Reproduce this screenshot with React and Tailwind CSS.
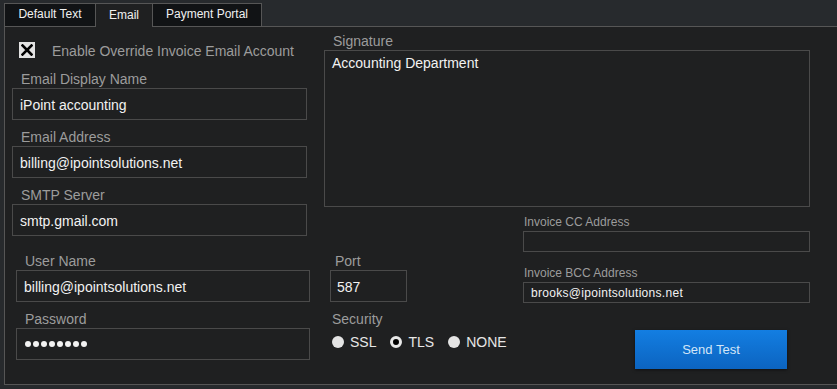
import React from "react";

function Field({ label, value, className = "", password = false }) {
  return (
    <div className={"flex flex-col " + className}>
      <div className="h-[16px] pl-[9px] text-[14px] leading-[16px] text-[#9c9c9c]">{label}</div>
      {password ? (
        <div className="mt-[1px] flex h-[32px] w-full items-center gap-[2px] border border-[#4a4a4a] px-[8px]">
          {Array.from({ length: 8 }).map((_, i) => (
            <span key={i} className="h-[6px] w-[6px] rounded-full bg-[#f2f2f2]" />
          ))}
        </div>
      ) : (
        <input
          readOnly
          defaultValue={value}
          className="mt-[1px] h-[32px] w-full border border-[#4a4a4a] bg-transparent px-[7px] pt-[1px] text-[14px] text-[#f2f2f2] outline-none"
        />
      )}
    </div>
  );
}

function Radio({ label, checked }) {
  return (
    <div className="flex items-center">
      {checked ? (
        <span className="h-[12px] w-[12px] rounded-full border-[3px] border-[#e8e8e8] bg-black" />
      ) : (
        <span className="h-[12px] w-[12px] rounded-full bg-[#e4e4e4]" />
      )}
      <span className="ml-[6px] text-[14px] leading-[16px] text-[#e6e6e6]">{label}</span>
    </div>
  );
}

export default function App() {
  return (
    <div className="h-[389px] w-[837px] overflow-hidden bg-[#272a2d] font-['Liberation_Sans',Arial,sans-serif]">
      {/* Tabs */}
      <div className="relative z-10 -mb-px flex pl-[4px] pt-[3px]">
        <div className="flex h-[24px] w-[92px] items-center justify-center border border-[#565656] bg-[#111315] pb-[2px] text-[12px] text-[#f0f0f0]">
          Default Text
        </div>
        <div className="-ml-px flex h-[24px] w-[58px] items-center justify-center border border-b-0 border-[#565656] bg-[#1f2021] pb-[2px] text-[12px] text-[#f0f0f0]">
          Email
        </div>
        <div className="-ml-px flex h-[24px] w-[110px] items-center justify-center border border-[#565656] bg-[#111315] pb-[2px] text-[12px] text-[#f0f0f0]">
          Payment Portal
        </div>
      </div>

      {/* Panel */}
      <div className="ml-[4px] flex h-[359px] w-[840px] items-start border border-[#565656] bg-[#1f2021] pl-[7px]">
        {/* Left column */}
        <div className="flex w-[298px] flex-col pt-[15px]">
          <div className="flex h-[16px] items-center">
            <span className="ml-[7px] flex h-[16px] w-[16px] items-center justify-center bg-[#e2e2e2]">
              <svg width="12" height="12" viewBox="0 0 12 12">
                <path d="M1.5 1.5 L10.5 10.5 M10.5 1.5 L1.5 10.5" stroke="#000" strokeWidth="2.6" strokeLinecap="square" />
              </svg>
            </span>
            <span className="ml-[17px] pt-[2px] text-[14px] leading-[16px] text-[#9c9c9c]">Enable Override Invoice Email Account</span>
          </div>
          <Field label="Email Display Name" value="iPoint accounting" className="mt-[13px] w-[295px]" />
          <Field label="Email Address" value="billing@ipointsolutions.net" className="mt-[9px] w-[295px]" />
          <Field label="SMTP Server" value="smtp.gmail.com" className="mt-[9px] w-[295px]" />
          <Field label="User Name" value="billing@ipointsolutions.net" className="ml-[4px] mt-[17px] w-[294px]" />
          <Field label="Password" password className="ml-[4px] mt-[9px] w-[294px]" />
        </div>

        {/* Right area */}
        <div className="ml-[14px] flex w-[486px] flex-col pt-[6px]">
          <div className="h-[16px] pl-[9px] text-[14px] leading-[16px] text-[#9c9c9c]">Signature</div>
          <textarea
            readOnly
            defaultValue="Accounting Department"
            className="mt-[1px] h-[157px] w-full resize-none border border-[#4a4a4a] bg-transparent px-[7px] pt-[4px] text-[14px] leading-[16px] text-[#f2f2f2] outline-none"
          />
          <div className="flex items-start">
            {/* Port / Security */}
            <div className="ml-[6px] flex w-[193px] flex-col pt-[46px]">
              <div className="h-[16px] pl-[5px] text-[14px] leading-[16px] text-[#9c9c9c]">Port</div>
              <input
                readOnly
                defaultValue="587"
                className="mt-[1px] h-[32px] w-[77px] border border-[#4a4a4a] bg-transparent px-[6px] pt-[1px] text-[14px] text-[#f2f2f2] outline-none"
              />
              <div className="mt-[9px] h-[16px] pl-[2px] text-[14px] leading-[16px] text-[#9c9c9c]">Security</div>
              <div className="ml-[2px] mt-[7px] flex items-center gap-[14px]">
                <Radio label="SSL" />
                <Radio label="TLS" checked />
                <Radio label="NONE" />
              </div>
            </div>
            {/* CC / BCC / Send */}
            <div className="flex w-[287px] flex-col pt-[7px]">
              <div className="h-[16px] pl-[1px] text-[12px] leading-[16px] text-[#9c9c9c]">Invoice CC Address</div>
              <div className="mt-[1px] h-[21px] w-full border border-[#4a4a4a]" />
              <div className="mt-[13px] h-[16px] pl-[1px] text-[12px] leading-[16px] text-[#9c9c9c]">Invoice BCC Address</div>
              <input
                readOnly
                defaultValue="brooks@ipointsolutions.net"
                className="mt-[1px] h-[21px] w-full border border-[#4a4a4a] bg-transparent px-[7px] text-[12px] tracking-[0.3px] text-[#f2f2f2] outline-none"
              />
              <button className="ml-[112px] mt-[27px] flex h-[39px] w-[152px] items-center justify-center bg-linear-to-b from-[#137ee2] to-[#0c64c0] text-[13px] text-[#d3e6f8] shadow-[0_1px_3px_rgba(0,0,0,0.5)]">
                Send Test
              </button>
            </div>
          </div>
        </div>
      </div>
    </div>
  );
}
